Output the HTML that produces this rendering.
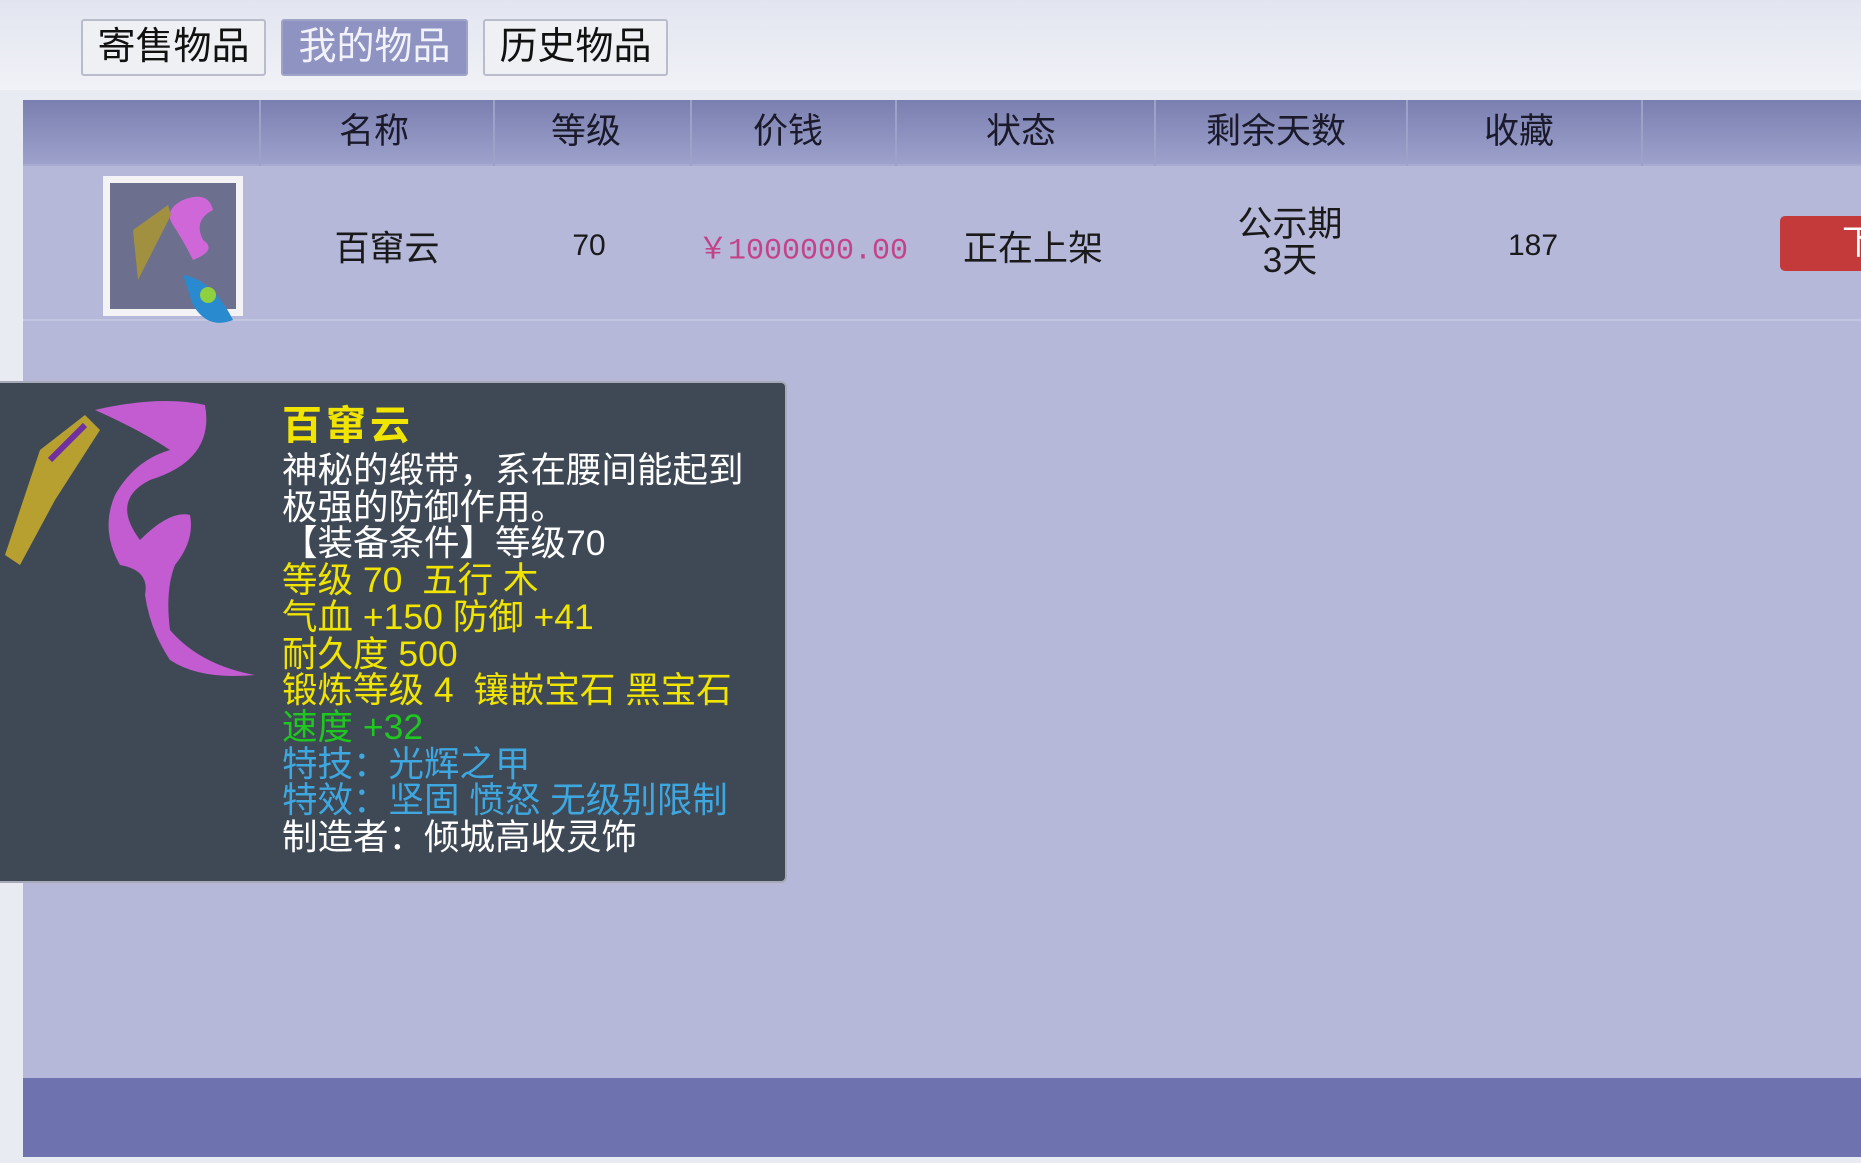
<!DOCTYPE html>
<html><head><meta charset="utf-8"><style>
*{margin:0;padding:0;box-sizing:border-box}
body{width:1861px;height:1163px;overflow:hidden;background:#e9ebf3;font-family:"Liberation Sans","Noto Sans CJK SC",sans-serif;position:relative}
.top{position:absolute;left:0;top:0;width:1861px;height:90px;background:linear-gradient(#e2e5f0,#f1f2f7)}
.tab{position:absolute;top:19px;height:57px;border:2px solid #b9bccb;border-radius:3px;background:#eef0f4;font-size:38px;line-height:52px;text-align:center;color:#111}
.tab.on{background:#8f93c2;color:#f2f2fa;border-color:#a0a3c8}
.main{position:absolute;left:23px;top:100px;width:1838px;height:1057px;background:#b5b8d9}
.hdr{position:absolute;left:0;top:0;width:100%;height:66px;background:linear-gradient(#7a7fb0,#9da1cb);border-bottom:2px solid #a8abd0}
.hdr span{position:absolute;top:0;line-height:64px;font-size:35px;color:#1a1a2a;transform:translateX(-50%)}
.div{position:absolute;top:0;width:2px;height:66px;background:#9ea2c8}
.cell{position:absolute;font-size:35px;color:#1a1a1a;transform:translate(-50%,-50%);white-space:nowrap;text-align:center}
.tip{position:absolute;left:0;top:381px;width:787px;height:502px;background:#3f4955;border:2px solid #a5a9b8;border-left:none;border-radius:0 6px 6px 0}
.tt{position:absolute;left:282px;top:400px;font-size:35.5px;line-height:36.7px;color:#fff}
.tt div{white-space:pre}
.y{color:#f0e400}.g{color:#1ec81e}.b{color:#3ea7e0}
</style></head><body>
<div class="top"></div>
<div class="tab" style="left:81px;width:185px">寄售物品</div>
<div class="tab on" style="left:281px;width:187px">我的物品</div>
<div class="tab" style="left:483px;width:185px">历史物品</div>
<div class="main">
 <div class="hdr">
  <div class="div" style="left:236px"></div><div class="div" style="left:470px"></div><div class="div" style="left:667px"></div><div class="div" style="left:872px"></div><div class="div" style="left:1131px"></div><div class="div" style="left:1383px"></div><div class="div" style="left:1618px"></div>
  <span style="left:351px">名称</span><span style="left:563px">等级</span><span style="left:765px">价钱</span><span style="left:998px">状态</span><span style="left:1253px">剩余天数</span><span style="left:1496px">收藏</span>
 </div>
 <div style="position:absolute;left:0;top:219px;width:100%;height:2px;background:#c3c6e2"></div>
 <div style="position:absolute;left:80px;top:76px;width:140px;height:140px;background:#f3f3f5;padding:7px">
  <div style="width:126px;height:126px;background:#6c6f8e"></div>
 </div>
 <svg style="position:absolute;left:90px;top:80px" width="150" height="150" viewBox="0 0 150 150">
  <path d="M70 20 Q95 10 100 30 Q80 40 90 60 Q105 70 80 80 Q70 60 60 45 Q50 30 70 20Z" fill="#d067d8"/>
  <path d="M20 50 L55 25 L58 35 L25 100 Z" fill="#a09040"/>
  <path d="M70 95 Q100 100 120 140 Q95 150 80 125 Z" fill="#2a8ad0"/>
  <circle cx="95" cy="115" r="8" fill="#8fd040"/>
 </svg>
 <div class="cell" style="left:364px;top:146px">百窜云</div>
 <div class="cell" style="left:566px;top:146px;font-size:30px">70</div>
 <div class="cell" style="left:780px;top:146px;font-size:30px;color:#c4428a;font-family:'Liberation Mono','Noto Sans CJK SC',monospace">￥1000000.00</div>
 <div class="cell" style="left:1010px;top:146px">正在上架</div>
 <div class="cell" style="left:1267px;top:143px;line-height:36px">公示期<br>3天</div>
 <div class="cell" style="left:1510px;top:146px;font-size:30px">187</div>
 <div style="position:absolute;left:1757px;top:116px;width:90px;height:55px;background:#c43a3a;border-radius:5px;color:#fff;font-size:34px;line-height:55px;padding-left:62px">下</div>
 <div style="position:absolute;left:0;top:978px;width:100%;height:79px;background:#6e73b0"></div>
</div>
<div class="tip"></div>
<svg style="position:absolute;left:0;top:390px" width="260" height="300" viewBox="0 0 260 300">
 <path d="M95 20 Q160 5 205 15 Q215 70 150 90 Q110 110 140 150 Q170 120 190 125 Q195 150 175 175 Q165 200 170 240 Q200 275 255 285 Q200 290 170 270 Q150 240 145 205 Q150 180 120 175 Q100 140 115 105 Q135 70 170 60 Q140 40 95 20Z" fill="#c25cd0"/>
 <path d="M40 60 L85 25 L100 40 L55 110 L20 175 L5 165 Z" fill="#b8a030"/>
 <path d="M50 70 L85 35" stroke="#7030a0" stroke-width="6"/>
</svg>
<div class="tt"><div class="y" style="font-size:40px;line-height:52px;font-weight:bold;letter-spacing:4px">百窜云</div><div>神秘的缎带，系在腰间能起到</div><div>极强的防御作用。</div><div>【装备条件】等级70</div><div class="y">等级 70  五行 木</div><div class="y">气血 +150 防御 +41</div><div class="y">耐久度 500</div><div class="y">锻炼等级 4  镶嵌宝石 黑宝石</div><div class="g">速度 +32</div><div class="b">特技：光辉之甲</div><div class="b">特效：坚固 愤怒 无级别限制</div><div>制造者：倾城高收灵饰</div></div>
</body></html>
